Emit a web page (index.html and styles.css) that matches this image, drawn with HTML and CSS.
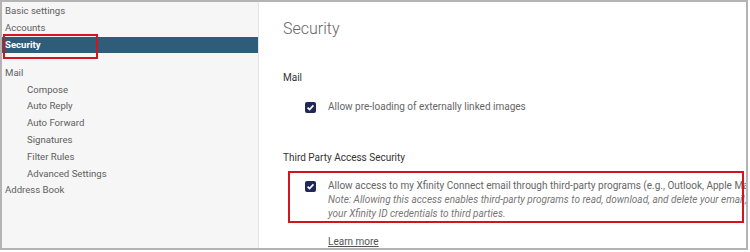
FILE: index.html
```html
<!DOCTYPE html>
<html>
	<head>
		<meta charset="utf-8">
		<title>Settings - Security</title>
		<link rel="stylesheet" href="styles.css">
	</head>
	<body>
		<div class="frame">
			<ul class="settings_nav">
				<li>Basic settings</li>
				<li>Accounts</li>
				<li class="on">Security<span class="mark mark--nav"></span></li>
				<li class="group">Mail</li>
				<li class="sub">Compose</li>
				<li class="sub">Auto Reply</li>
				<li class="sub">Auto Forward</li>
				<li class="sub">Signatures</li>
				<li class="sub">Filter Rules</li>
				<li class="sub">Advanced Settings</li>
				<li>Address Book</li>
			</ul>
			<div class="settings_main">
				<h1>Security</h1>
				<h2 class="settings_main__label">Mail</h2>
				<div class="option">
					<span class="checkbox"><svg width="11" height="11" viewBox="0 0 11 11"><rect width="11" height="11" rx="2" fill="#1f2858"/><path d="M2.6 5.6 L4.6 7.6 L8.4 3.4" fill="none" stroke="#fff" stroke-width="1.7"/></svg></span>
					<p>Allow pre-loading of externally linked images</p>
				</div>
				<h2 class="settings_main__label label--third">Third Party Access Security</h2>
				<div class="option option--third">
					<span class="checkbox"><svg width="11" height="11" viewBox="0 0 11 11"><rect width="11" height="11" rx="2" fill="#1f2858"/><path d="M2.6 5.6 L4.6 7.6 L8.4 3.4" fill="none" stroke="#fff" stroke-width="1.7"/></svg></span>
					<p>Allow access to my Xfinity Connect email through third-party programs (e.g., Outlook, Apple Mail, iOS Mail).<br>
					<em>Note: Allowing this access enables third-party programs to read, download, and delete your email, and may expose<br>
					your Xfinity ID credentials to third parties.</em></p>
					<span class="mark mark--option"></span>
				</div>
				<a class="learn_more" href="#">Learn more</a>
			</div>
		</div>
	</body>
</html>
```

FILE: styles.css
```css
html, body, ul, li, h1, h2, p { margin:0; padding:0; }
ul, li { list-style:none; }
body { background:#fff; font-family:Roboto, "Noto Sans", sans-serif; }
.frame { display:flex; width:748px; height:250px; box-sizing:border-box; border:2px solid #b4b4b4; overflow:hidden; }

.settings_nav { width:256px; flex:none; background:#f6f6f6; border-right:1px solid #e4e4e4; padding-top:1px; }
.settings_nav li { position:relative; height:16.8px; line-height:16.8px; padding-left:3px; font-size:9.6px; color:#606060; }
.settings_nav li.on { background:#2e5c79; color:#fff; font-weight:700; }
.settings_nav li.group { margin-top:11.5px; }
.settings_nav li.sub { padding-left:25px; }

.settings_main { flex:1; padding:17px 0 0 24px; overflow:hidden; white-space:nowrap; }
.settings_main h1 { font-size:16px; line-height:20px; font-weight:300; color:#666; }
.settings_main__label { margin-top:32px; font-size:10px; line-height:14px; font-weight:400; color:#333; }
.settings_main__label.label--third { margin-top:37px; }
.option { position:relative; display:flex; align-items:flex-start; gap:12px; margin-top:15px; padding-left:22px; }
.option--third { margin-top:14px; }
.option .checkbox { flex:none; width:11px; height:11px; margin-top:2px; }
.option .checkbox svg { display:block; }
.option p { font-size:10px; line-height:14px; color:#666; }
.option p em { color:#777; }
.learn_more { display:inline-block; margin:14px 0 0 45px; font-size:10px; line-height:14px; color:#555; text-decoration:underline; }

.mark { position:absolute; border:2px solid #d4141c; box-sizing:border-box; }
.mark--nav { left:1px; top:-2.4px; width:95px; height:25px; }
.mark--option { left:5px; top:-8px; width:456px; height:52px; }
```
